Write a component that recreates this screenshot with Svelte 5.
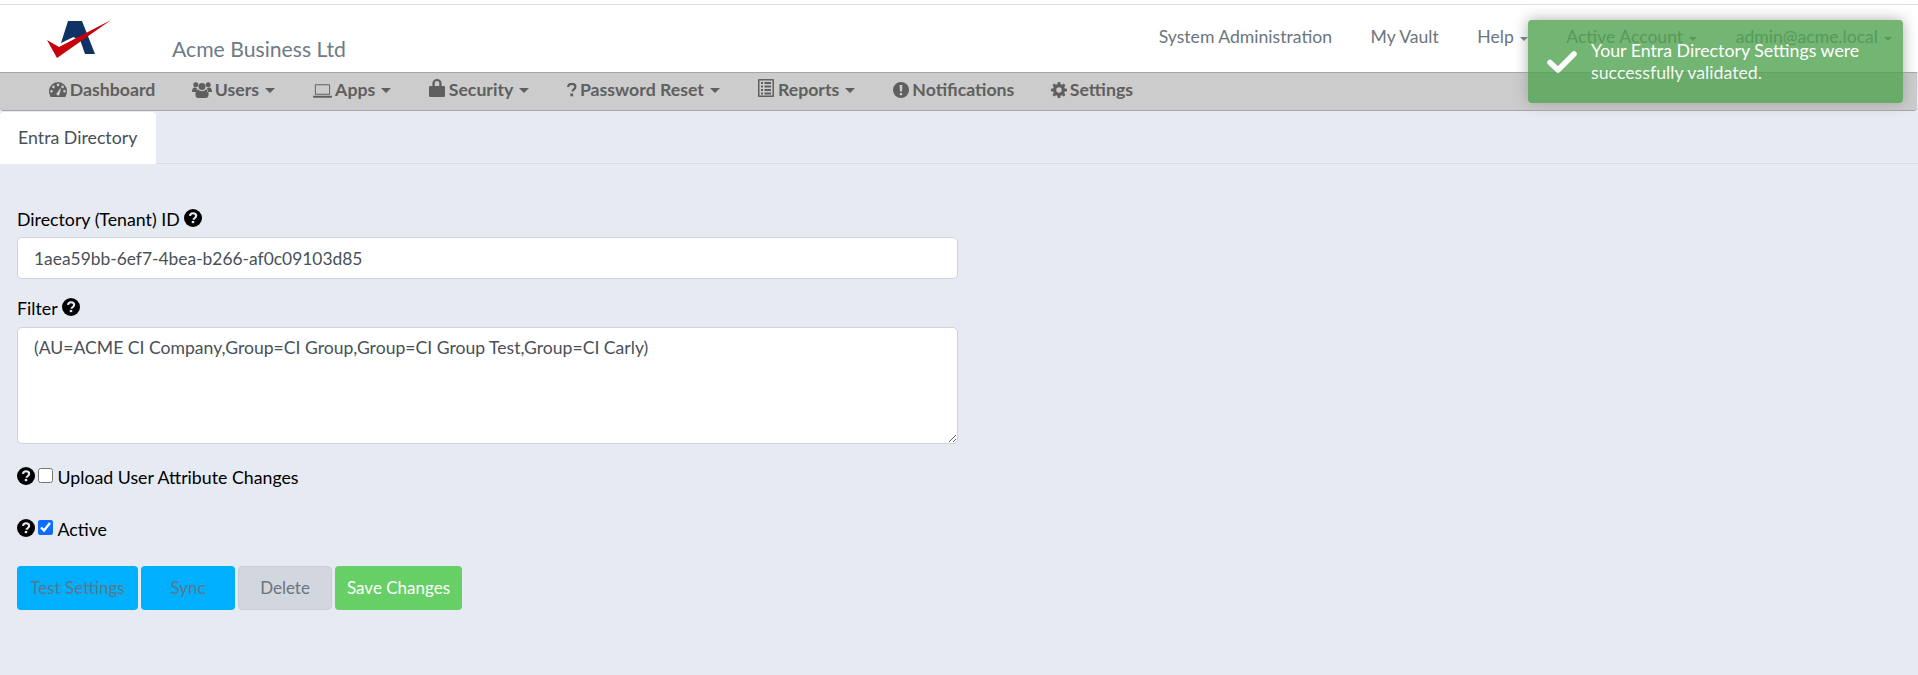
<script>
  const navItems = [
    { icon: "dashboard", label: "Dashboard" },
    { icon: "users", label: "Users", caret: true },
    { icon: "laptop", label: "Apps", caret: true },
    { icon: "lock", label: "Security", caret: true },
    { icon: "question", label: "Password Reset", caret: true },
    { icon: "list", label: "Reports", caret: true },
    { icon: "alert", label: "Notifications" },
    { icon: "cog", label: "Settings" },
  ];

  const topLinks = [
    { label: "System Administration" },
    { label: "My Vault" },
    { label: "Help", caret: true },
    { label: "Active Account", caret: true },
    { label: "admin@acme.local", caret: true },
  ];

  let tenantId = "1aea59bb-6ef7-4bea-b266-af0c09103d85";
  let filter = "(AU=ACME CI Company,Group=CI Group,Group=CI Group Test,Group=CI Carly)";
  let upload = false;
  let active = true;
</script>

{#snippet helpIcon()}
  <svg class="help" viewBox="0 0 16 16" aria-hidden="true">
    <circle cx="8" cy="8" r="8" fill="#000" />
    <path d="M5.3 6.1C5.5 4.6 6.6 3.8 8 3.8c1.6 0 2.8.9 2.8 2.3 0 1.2-.8 1.7-1.5 2.2-.5.3-.8.6-.8 1.2" fill="none" stroke="#e6eaf2" stroke-width="1.9" />
    <rect x="6.9" y="10.6" width="2.2" height="2" fill="#e6eaf2" />
  </svg>
{/snippet}

{#snippet navIcon(name)}
  {#if name === "dashboard"}
    <svg class="ico dash" viewBox="0 0 18 15">
      <path fill-rule="evenodd" d="M9 0a9 9 0 0 1 9 9c0 2-.6 4.200-1.600 6H1.600A11 11 0 0 1 0 9a9 9 0 0 1 9-9zM9 1.600a1.300 1.300 0 1 0 0 2.600 1.300 1.300 0 0 0 0-2.600zM4.400 3.600a1.300 1.300 0 1 0 0 2.600 1.300 1.300 0 0 0 0-2.600zM13.600 3.600a1.300 1.300 0 1 0 0 2.600 1.300 1.300 0 0 0 0-2.600zM2.500 8a1.300 1.300 0 1 0 0 2.600 1.300 1.300 0 0 0 0-2.600zM15.500 8a1.300 1.300 0 1 0 0 2.600 1.300 1.300 0 0 0 0-2.600zM8 11a1.500 1.500 0 1 0 2.600 1.200l1.300-5.400-.8-.2z" />
    </svg>
  {:else if name === "users"}
    <svg class="ico users" viewBox="0 0 20 18">
      <circle cx="10" cy="5.500" r="3.500" />
      <circle cx="3.800" cy="3.800" r="2.500" />
      <circle cx="16.200" cy="3.800" r="2.500" />
      <path d="M0 11c0-3 1-4.500 2.500-4.500.8 0 1.500.5 2.500.7-.5 1.200-.6 2.500-.2 3.800H1c-.6 0-1-.1-1-.1zM20 11c0-3-1-4.500-2.500-4.500-.8 0-1.500.5-2.500.7.500 1.200.6 2.500.2 3.800H19c.6 0 1-.1 1-.1zM6.200 8.400C7 9.400 8.400 10 10 10s3-.6 3.800-1.600c1.800 0 2.800 1.600 2.800 5 0 2.300-1.200 3.600-3 3.600H6.400c-1.800 0-3-1.300-3-3.600 0-3.400 1-5 2.800-5z" />
    </svg>
  {:else if name === "laptop"}
    <svg class="ico laptop" viewBox="0 0 20 14">
      <path fill-rule="evenodd" d="M3 0h14a1 1 0 0 1 1 1v10H2V1a1 1 0 0 1 1-1zm0 1v9h14V1zM0 12h20v1a1 1 0 0 1-1 1H1a1 1 0 0 1-1-1z" />
    </svg>
  {:else if name === "lock"}
    <svg class="ico lock" viewBox="0 0 14 18" preserveAspectRatio="none">
      <path fill-rule="evenodd" d="M3 7V4a4 4 0 0 1 8 0v3h2a1 1 0 0 1 1 1v9a1 1 0 0 1-1 1H1a1 1 0 0 1-1-1V8a1 1 0 0 1 1-1zm2 0h4V4a2 2 0 0 0-4 0z" />
    </svg>
  {:else if name === "question"}
    <svg class="ico qm" viewBox="0 0 9 14">
      <path d="M.8 4C1 1.900 2.500.8 4.500.8 6.700.8 8.200 2 8.200 3.800c0 1.500-.9 2.200-1.900 2.900-.7.500-1 .9-1 1.800" fill="none" stroke="currentColor" stroke-width="2.200" />
      <rect x="3.100" y="10.500" width="2.800" height="2.800" />
    </svg>
  {:else if name === "list"}
    <svg class="ico list" viewBox="0 0 16 18" preserveAspectRatio="none">
      <path fill-rule="evenodd" d="M1 0h14a1 1 0 0 1 1 1v16a1 1 0 0 1-1 1H1a1 1 0 0 1-1-1V1a1 1 0 0 1 1-1zm.5 1.500v15h13v-15zM3 3h2v2H3zM6.500 3H13v2H6.500zM3 6.500h2v2H3zM6.500 6.500H13v2H6.500zM3 10h2v2H3zM6.500 10H13v2H6.500zM3 13.500h2v2H3zM6.500 13.500H13v2H6.500z" />
    </svg>
  {:else if name === "alert"}
    <svg class="ico" viewBox="0 0 16 16">
      <path fill-rule="evenodd" d="M8 0a8 8 0 1 1 0 16A8 8 0 0 1 8 0zM6.600 3l.3 6.600h2.200L9.400 3zM6.800 11v2.200h2.400V11z" />
    </svg>
  {:else if name === "cog"}
    <svg class="ico" viewBox="0 0 16 16">
      <path fill-rule="evenodd" d="M6.800 0h2.400l.4 2.200 1.400.6L12.800 1.500l1.700 1.700-1.300 1.800.6 1.400 2.200.4v2.400l-2.200.4-.6 1.400 1.300 1.800-1.700 1.700-1.800-1.300-1.400.6-.4 2.200H6.800l-.4-2.200-1.400-.6-1.800 1.300-1.700-1.700 1.300-1.800-.6-1.400L0 9.200V6.800l2.200-.4.6-1.400-1.300-1.800 1.700-1.700L5 2.800l1.400-.6zM8 5.300a2.700 2.700 0 1 0 0 5.400 2.700 2.700 0 0 0 0-5.400z" />
    </svg>
  {/if}
{/snippet}

<div class="page">
  <header class="topbar">
    <div class="brand">
      <svg class="logo" viewBox="40 15 80 50" aria-hidden="true">
        <path d="M68 21H82L95 54H85L80.500 41 73.500 37 61 43z" fill="#0f3364" />
        <path d="M47 40 59 47 111 20 57 58z" fill="#c8000a" />
      </svg>
      <span class="company">Acme Business Ltd</span>
    </div>
    <nav class="toplinks">
      {#each topLinks as link}
        <a href="#top">{link.label}{#if link.caret}<i class="caret"></i>{/if}</a>
      {/each}
    </nav>
  </header>

  <nav class="mainnav">
    {#each navItems as item}
      <a href="#top">
        {@render navIcon(item.icon)}<span>{item.label}</span>{#if item.caret}<i class="caret"></i>{/if}
      </a>
    {/each}
  </nav>

  <div class="tabs">
    <a class="tab" href="#top">Entra Directory</a>
  </div>

  <form class="settings" onsubmit={(e) => e.preventDefault()}>
    <label class="field-label" for="tenant">Directory (Tenant) ID {@render helpIcon()}</label>
    <input id="tenant" class="control" type="text" bind:value={tenantId} />

    <label class="field-label filter-label" for="filter">Filter {@render helpIcon()}</label>
    <textarea id="filter" class="control" bind:value={filter}></textarea>

    <div class="check-row upload-row">
      {@render helpIcon()}
      <input id="upload" type="checkbox" bind:checked={upload} />
      <label for="upload">Upload User Attribute Changes</label>
    </div>

    <div class="check-row active-row">
      {@render helpIcon()}
      <input id="active" type="checkbox" bind:checked={active} />
      <label for="active">Active</label>
    </div>

    <div class="actions">
      <button class="btn info" style="width: 121px">Test Settings</button>
      <button class="btn info" style="width: 94px">Sync</button>
      <button class="btn muted" style="width: 94px">Delete</button>
      <button class="btn success" style="width: 127px">Save Changes</button>
    </div>
  </form>

  <div class="toast" role="status">
    <svg class="toast-check" viewBox="0 0 30 22" aria-hidden="true">
      <path d="M3 11.500 11 19 27 3" fill="none" stroke="#fff" stroke-width="5.500" stroke-linejoin="round" stroke-linecap="round" />
    </svg>
    <p>Your Entra Directory Settings were successfully validated.</p>
  </div>
</div>

<style>
  :global(body) {
    margin: 0;
    background: #e6eaf2;
    font-family: Lato, "Open Sans", sans-serif;
  }

  .page {
    position: relative;
    height: 675px;
    overflow: hidden;
    background: #e6eaf2;
    font-size: 17.75px;
    padding-top: 4px;
    box-sizing: border-box;
  }

  .page::before {
    content: "";
    position: absolute;
    inset: 0 0 auto 0;
    height: 4px;
    background: #fff;
  }

  .topbar {
    display: flex;
    justify-content: space-between;
    height: 67px;
    background: #fff;
    border-top: 1px solid #e0e0e0;
  }

  .brand {
    display: flex;
    align-items: flex-start;
    padding-left: 40px;
  }

  .logo {
    width: 80px;
    height: 50px;
    margin-top: 10px;
  }

  .company {
    margin: 31px 0 0 52px;
    font-size: 21.2px;
    line-height: 26px;
    color: #6f7a85;
  }

  .toplinks {
    display: flex;
    align-items: flex-start;
    gap: 38.5px;
    padding: 21px 26px 0 0;
    font-size: 17.6px;
  }

  .toplinks a {
    color: #6c757d;
    text-decoration: none;
    line-height: 22px;
  }

  .caret {
    display: inline-block;
    width: 0;
    height: 0;
    margin-left: 6px;
    vertical-align: middle;
    border-top: 4.5px solid currentColor;
    border-left: 4.5px solid transparent;
    border-right: 4.5px solid transparent;
  }

  .mainnav {
    display: flex;
    align-items: center;
    height: 39px;
    box-sizing: border-box;
    padding: 0 0 4px 30.500px;
    margin-right: 1px;
    background: #ccc;
    border-top: 1px solid #a6a6a6;
    border-bottom: 1px solid #a6a6a6;
    border-radius: 0 0 4px 4px;
  }

  .mainnav a {
    display: flex;
    align-items: center;
    padding: 0 18.25px;
    color: #5f5f5f;
    font-size: 17.7px;
    font-weight: 700;
    text-decoration: none;
  }

  .mainnav .caret {
    margin: 1px 1.5px 0 6px;
    border-top-width: 5px;
    border-left-width: 5px;
    border-right-width: 5px;
  }

  .ico {
    width: 16px;
    height: 16px;
    margin-right: 3px;
    fill: currentColor;
  }

  .ico.dash {
    width: 18px;
    height: 15px;
  }

  .ico.users {
    width: 20px;
    height: 18px;
  }

  .ico.laptop {
    width: 19px;
    height: 14px;
    margin-top: 2px;
  }

  .ico.lock {
    width: 16px;
    height: 18px;
    margin-top: -3px;
    margin-right: 3.500px;
  }

  .ico.qm {
    width: 9.500px;
    height: 14px;
  }

  .ico.list {
    width: 16px;
    height: 18px;
    margin-top: -3px;
    margin-right: 4px;
  }

  .tabs {
    display: flex;
    margin-top: 1px;
    height: 52px;
    box-sizing: border-box;
    border-bottom: 1px solid #d8dbe0;
  }

  .tab {
    display: flex;
    align-items: center;
    padding: 0 0 2px 18px;
    width: 156px;
    box-sizing: border-box;
    height: 52px;
    background: #fff;
    border-radius: 4px 4px 0 0;
    color: #495057;
    text-decoration: none;
  }

  .settings {
    display: flex;
    flex-direction: column;
    align-items: flex-start;
    padding: 44px 0 0 17px;
    color: #000;
  }

  .field-label {
    display: flex;
    align-items: center;
    gap: 4px;
    height: 22px;
    margin-bottom: 7px;
  }

  .filter-label {
    margin-top: 18px;
    margin-bottom: 8px;
  }

  .help {
    width: 18px;
    height: 18px;
    margin-top: -2px;
    flex: none;
  }

  .control {
    width: 941px;
    box-sizing: border-box;
    border: 1px solid #ced4da;
    border-radius: 5px;
    background: #fff;
    font: 17.4px Lato, "Open Sans", sans-serif;
    color: #495057;
    padding: 0 16px;
    outline: none;
  }

  textarea.control {
    display: block;
    height: 117px;
    padding-top: 9px;
    line-height: 22px;
    font-size: 17.6px;
  }

  input.control {
    height: 42px;
  }

  .check-row {
    display: flex;
    align-items: center;
    height: 22px;
  }

  .check-row input {
    width: 15px;
    height: 15px;
    margin: -4px 4.5px 0 3px;
    accent-color: #0d6efd;
  }

  .upload-row {
    margin-top: 22px;
  }

  .active-row {
    margin-top: 30px;
  }

  .actions {
    display: flex;
    gap: 3px;
    margin-top: 26px;
  }

  .btn {
    height: 44px;
    padding: 0 0 1px;
    border: 1px solid transparent;
    border-radius: 4px;
    font: 17px Lato, "Open Sans", sans-serif;
  }

  .info {
    background: #00b0ff;
    color: #5f7688;
  }

  .muted {
    background: #d2d6de;
    border-color: #c9cdd4;
    color: #6c757d;
  }

  .success {
    background: #66cf66;
    color: #fff;
  }

  .toast {
    position: absolute;
    top: 20px;
    left: 1528px;
    width: 375px;
    height: 83px;
    display: flex;
    box-sizing: border-box;
    padding: 19px 18px 0 19px;
    border-radius: 4px;
    background: #51a351;
    opacity: 0.8;
    box-shadow: 0 0 14px #999;
    color: #fff;
  }

  .toast-check {
    flex: none;
    width: 30px;
    height: 22px;
    margin: 12px 14px 0 0;
  }

  .toast p {
    margin: 0;
    line-height: 22px;
  }
</style>
